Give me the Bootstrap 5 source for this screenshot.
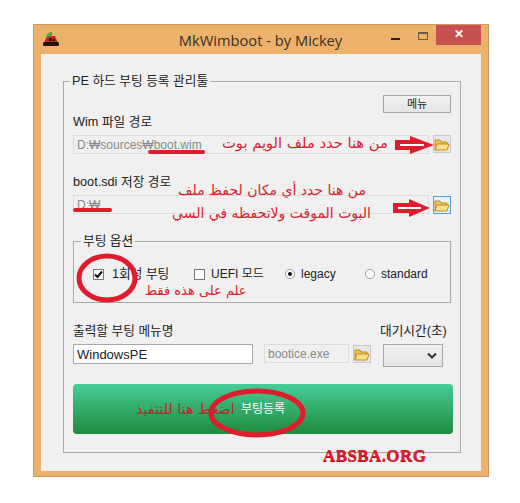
<!doctype html>
<html lang="ko">
  <head>
    <meta charset="UTF-8" />
    <meta name="viewport" content="width=device-width, initial-scale=1.0" />
    <title>MkWimboot - by Mickey</title>
    <link
      rel="stylesheet"
      href="https://cdn.jsdelivr.net/npm/bootstrap@5.3.0/dist/css/bootstrap.min.css"
    />
    <style>
      body {
        background: #fff;
        font-family: "Liberation Sans", "Noto Sans CJK KR", sans-serif;
        font-size: 12px;
        color: #222;
      }
      .stage {
        position: relative;
        width: 520px;
        height: 503px;
        padding: 24px 31px 26px 33px;
      }
      .app-window {
        height: 453px;
        background: #ecb26c;
        border: 1px solid #c9995f;
        padding: 0 7px 6px 7px;
      }
      .title-row {
        height: 29px;
        position: relative;
      }
      .app-title {
        font-family: "Open Sans", sans-serif;
        font-size: 14.7px;
        color: #3b3026;
        padding-top: 4px;
        padding-right: 1px;
      }
      .app-logo {
        position: absolute;
        left: 2px;
        top: 7px;
      }
      .win-btns {
        position: absolute;
        right: 0;
        top: 0;
      }
      .win-min {
        width: 9px;
        height: 2px;
        background: #222;
        margin: 13px 18px 0 0;
      }
      .win-max {
        width: 10px;
        height: 8px;
        border: 1px solid #6d5a42;
        border-top-width: 2px;
        margin: 7px 8px 0 0;
      }
      .win-close {
        width: 45px;
        height: 20px;
        background: #c75050;
        color: #fff;
        font-size: 12px;
        font-weight: 700;
        line-height: 18px;
      }
      .app-client {
        height: 417px;
        background: #f0f0f0;
        padding: 21px 20px 18px 22px;
      }
      .group-main {
        height: 378px;
        border: 1px solid #a9a9a9;
        padding: 0 9px;
        margin: 0;
        min-width: 0;
      }
      .group-main > legend,
      .group-opts > legend {
        float: none;
        width: auto;
        font-size: 12.7px;
        line-height: 12px;
        padding: 0 2px;
        margin: 0 0 0 -3px;
        color: #222;
      }
      .group-opts > legend {
        margin-left: -12px;
      }
      .menu-row {
        height: 18px;
        margin-top: 8px;
      }
      .btn-menu {
        width: 68px;
        height: 18px;
        padding: 0;
        font-size: 11px;
        line-height: 15px;
        border: 1px solid #a6a6a6;
        border-radius: 0;
        background: linear-gradient(#f3f3f3, #e4e4e4);
        color: #222;
      }
      .fld-label {
        display: block;
        font-size: 12.7px;
        line-height: 14px;
        margin: 0;
        white-space: nowrap;
      }
      .fld-first { margin-top: 2px; }
      .fld-gap { margin-top: 21px; }
      .fld-top { margin-top: 6px; }
      .fld-input {
        height: 19px;
        min-height: 0;
        padding: 0 3px;
        font-size: 12px;
        line-height: 17px;
        border: 1px solid #dcdcdc;
        border-radius: 0;
        color: #888;
      }
      .fld-input:disabled {
        background: #f0f0f0;
      }
      .fld-white {
        border-color: #a9a9a9;
        background: #fff;
        color: #222;
        font-size: 13px;
        height: 20px;
      }
      .btn-folder {
        width: 18px;
        height: 18px;
        padding: 0;
        flex: none;
        border: 1px solid #c9c9c9;
        border-radius: 0;
        background: #e6e6e6;
        display: flex;
        align-items: center;
        justify-content: center;
      }
      .btn-focus {
        border-color: #55a0e0;
        background: #e6f1fa;
        margin-top: 1px;
      }
      .group-opts {
        height: 68px;
        border: 1px solid #a9a9a9;
        padding: 0 0 0 19px;
        margin: 21px 0 0 0;
        min-width: 0;
      }
      .opt-row {
        margin-top: 20px;
        height: 14px;
        line-height: 14px;
      }
      .opt-item {
        display: flex;
        align-items: center;
        gap: 6px;
        margin: 0;
        white-space: nowrap;
      }
      .opt-a { width: 101px; gap: 8px; font-size: 12.7px; }
      .opt-b { width: 91px; }
      .opt-c { width: 80px; }
      .chk-box {
        width: 11px;
        height: 11px;
        border: 1px solid #777;
        background: #fff;
        display: flex;
        flex: none;
      }
      .rad-dot {
        width: 10px;
        height: 10px;
        border-radius: 50%;
        border: 1px solid #999;
        background: #fff;
        display: flex;
        flex: none;
        align-items: center;
        justify-content: center;
      }
      .rad-dot i {
        width: 4px;
        height: 4px;
        border-radius: 50%;
        background: #111;
      }
      .low-row { margin-top: 21px; height: 60px; }
      .low-name { width: 180px; flex: none; }
      .low-input { margin-top: 6px; }
      .low-boot { margin-left: 11px; width: 116px; height: 39px; flex: none; }
      .low-exe { width: 85px; flex: none; }
      .low-wait { flex: none; }
      .fake-select {
        width: 60px;
        height: 23px;
        margin: 6px 0 0 3px;
        border: 1px solid #a9a9a9;
        background: linear-gradient(#f2f2f2, #e3e3e3);
        display: flex;
        align-items: center;
        justify-content: flex-end;
        padding-right: 5px;
      }
      .btn-run {
        width: 380px;
        height: 50px;
        padding: 0;
        border: 0;
        border-radius: 4px;
        background: linear-gradient(#47cd99, #1f8a3c);
        color: #fff;
        font-size: 12px;
      }
      .note-layer {
        position: absolute;
        left: 0;
        top: 0;
        pointer-events: none;
      }
      .note {
        position: absolute;
        font-family: "DejaVu Sans", sans-serif;
        color: #d8232e;
        white-space: nowrap;
        line-height: 1;
        direction: rtl;
      }
      .note-a { left: 222px; top: 136px; font-size: 14.7px; }
      .note-b { left: 178px; top: 183px; font-size: 14px; }
      .note-c { left: 172px; top: 206px; font-size: 14px; }
      .note-d { left: 145px; top: 284px; font-size: 13px; }
      .note-e { left: 136px; top: 402px; font-size: 14.3px; color: #b8282c; }
      .note-site {
        position: absolute;
        left: 323px;
        top: 447px;
        font-family: "Liberation Serif", serif;
        font-weight: 700;
        font-size: 17px;
        line-height: 1;
        color: #e01f2d;
        letter-spacing: 0.4px;
        text-shadow: 0 1px 0 #a5141f;
      }
    </style>
  </head>
  <body>
    <div class="stage">
      <div class="app-window">
        <!-- title bar -->
        <div class="title-row text-center">
          <svg class="app-logo" width="16" height="14" viewBox="0 0 16 14">
            <path d="M3 6 C3 2 6 0 9 0 C10 3 7 6 3 6Z" fill="#3fae3c" />
            <path d="M1 11 L3 6 L7 4 L12 4 L15 11Z" fill="#c8202a" />
            <rect x="0" y="10" width="16" height="4" rx="1.5" fill="#1d1512" />
            <rect x="6" y="6" width="3" height="3" fill="#1d1512" />
            <rect x="10" y="7" width="2" height="2" fill="#1d1512" />
          </svg>
          <div class="app-title">MkWimboot - by Mickey</div>
          <div class="win-btns d-flex align-items-start">
            <div class="win-min"></div>
            <div class="win-max"></div>
            <div class="win-close text-center">&#10005;</div>
          </div>
        </div>

        <div class="app-client">
          <fieldset class="group-main">
            <legend>PE 하드 부팅 등록 관리툴</legend>

            <div class="menu-row d-flex justify-content-end">
              <button type="button" class="btn btn-menu">메뉴</button>
            </div>

            <label class="fld-label fld-first">Wim 파일 경로</label>
            <div class="d-flex gap-1 fld-top">
              <input class="form-control fld-input flex-fill" value="D:₩sources₩boot.wim" disabled />
              <button type="button" class="btn btn-folder">
                <svg width="16" height="13" viewBox="0 0 16 13"><path d="M1 12V2h5l1 2h6v2" fill="#f0c24f" stroke="#b98f2c" /><path d="M1 12l2-6h12l-2 6Z" fill="#fbdf85" stroke="#b98f2c" /></svg>
              </button>
            </div>

            <label class="fld-label fld-gap">boot.sdi 저장 경로</label>
            <div class="d-flex gap-1 fld-top">
              <input class="form-control fld-input flex-fill" value="D:₩" disabled />
              <button type="button" class="btn btn-folder btn-focus">
                <svg width="16" height="13" viewBox="0 0 16 13"><path d="M1 12V2h5l1 2h6v2" fill="#f0c24f" stroke="#b98f2c" /><path d="M1 12l2-6h12l-2 6Z" fill="#fbdf85" stroke="#b98f2c" /></svg>
              </button>
            </div>

            <fieldset class="group-opts">
              <legend>부팅 옵션</legend>
              <div class="opt-row d-flex">
                <label class="opt-item opt-a">
                  <span class="chk-box">
                    <svg width="9" height="9" viewBox="0 0 9 9"><path d="M1 4.5 L3.5 7 L8 1.5" fill="none" stroke="#111" stroke-width="2" /></svg>
                  </span>1회성 부팅
                </label>
                <label class="opt-item opt-b"><span class="chk-box"></span>UEFI 모드</label>
                <label class="opt-item opt-c"><span class="rad-dot"><i></i></span>legacy</label>
                <label class="opt-item"><span class="rad-dot"></span>standard</label>
              </div>
            </fieldset>

            <div class="d-flex low-row">
              <div class="low-name">
                <label class="fld-label">출력할 부팅 메뉴명</label>
                <input class="form-control fld-input fld-white low-input" value="WindowsPE" />
              </div>
              <div class="d-flex gap-1 align-items-end low-boot">
                <input class="form-control fld-input low-exe" value="bootice.exe" disabled />
                <button type="button" class="btn btn-folder">
                  <svg width="16" height="13" viewBox="0 0 16 13"><path d="M1 12V2h5l1 2h6v2" fill="#f0c24f" stroke="#b98f2c" /><path d="M1 12l2-6h12l-2 6Z" fill="#fbdf85" stroke="#b98f2c" /></svg>
                </button>
              </div>
              <div class="low-wait">
                <label class="fld-label">대기시간(초)</label>
                <div class="fake-select">
                  <svg width="10" height="7" viewBox="0 0 10 7"><path d="M1 1.5 L5 5.5 L9 1.5" fill="none" stroke="#333" stroke-width="2" /></svg>
                </div>
              </div>
            </div>

            <button type="button" class="btn btn-run">부팅등록</button>
          </fieldset>
        </div>
      </div>

      <!-- red notes drawn over the window -->
      <svg class="note-layer" width="520" height="503" viewBox="0 0 520 503">
        <g fill="none" stroke="#e01b2c" stroke-linecap="round">
          <path d="M150 152 H203" stroke-width="4" />
          <path d="M75 210 H110" stroke-width="4" />
          <ellipse cx="107" cy="278" rx="28" ry="22" stroke-width="5" />
          <ellipse cx="257" cy="413" rx="46" ry="22" stroke-width="5" />
        </g>
        <g fill="#e01b2c">
          <path d="M395 140 H410 V136 L434 145 L410 154 V150 H395Z" />
          <path d="M393 203 H409 V199 L430 208 L409 217 V213 H393Z" />
        </g>
        <g stroke="#fff" stroke-width="2">
          <path d="M400 145 H424" />
          <path d="M398 208 H421" />
        </g>
      </svg>
      <div class="note note-a">من هنا حدد ملف الويم بوت</div>
      <div class="note note-b">من هنا حدد أي مكان لحفظ ملف</div>
      <div class="note note-c">البوت الموقت ولاتحفظه في السي</div>
      <div class="note note-d">علم على هذه فقط</div>
      <div class="note note-e">اضغط هنا للتنفيذ</div>
      <div class="note-site">ABSBA.ORG</div>
    </div>
    <script src="https://cdn.jsdelivr.net/npm/bootstrap@5.3.0/dist/js/bootstrap.bundle.min.js"></script>
  </body>
</html>
